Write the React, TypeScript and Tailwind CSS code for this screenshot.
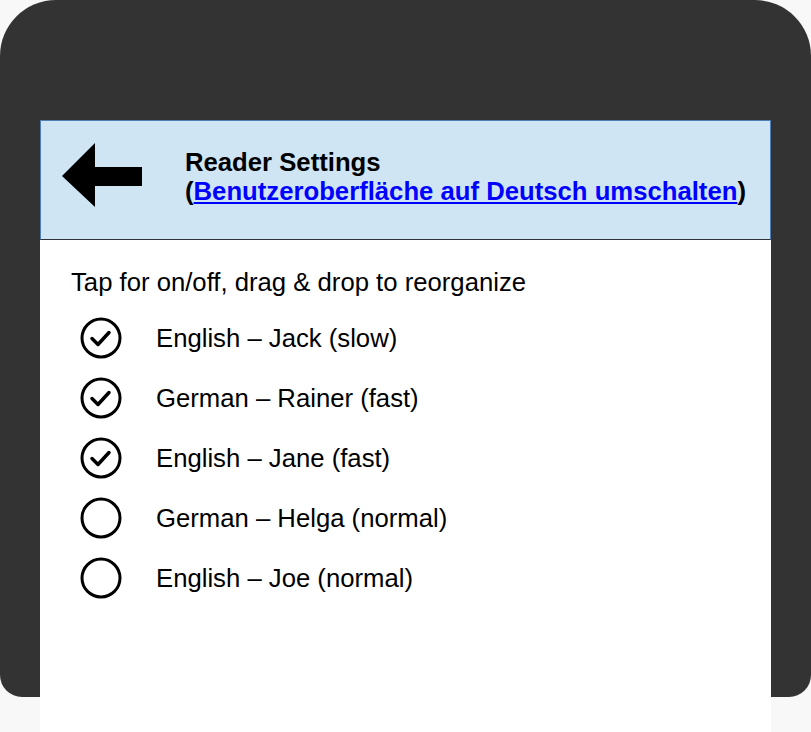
import React, { useState } from 'react';

type Voice = { label: string; on: boolean };

const VOICES: Voice[] = [
  { label: 'English – Jack (slow)', on: true },
  { label: 'German – Rainer (fast)', on: true },
  { label: 'English – Jane (fast)', on: true },
  { label: 'German – Helga (normal)', on: false },
  { label: 'English – Joe (normal)', on: false },
];

const BackArrow: React.FC = () => (
  <svg width="80" height="64" viewBox="0 0 80 64" className="shrink-0">
    <polygon points="0,33 33,0 33,24 80,24 80,43 33,43 33,64" fill="#000" />
  </svg>
);

const CheckCircle: React.FC<{ on: boolean }> = ({ on }) => (
  <svg width="42" height="42" viewBox="0 0 42 42" className="shrink-0">
    <circle cx="21" cy="21" r="19" fill="none" stroke="#000" strokeWidth="3" />
    {on && (
      <polyline
        points="12,21.5 18,27.5 29,15.5"
        fill="none"
        stroke="#000"
        strokeWidth="3.5"
        strokeLinecap="round"
        strokeLinejoin="round"
      />
    )}
  </svg>
);

const App: React.FC = () => {
  const [voices, setVoices] = useState<Voice[]>(VOICES);

  const toggle = (i: number) => {
    setVoices((v) => v.map((x, j) => (j === i ? { ...x, on: !x.on } : x)));
  };

  return (
    <div className="w-[811px] h-[732px] overflow-hidden bg-[#f8f8f8] font-['Liberation_Sans',Arial,sans-serif] text-black">
      <div className="w-[811px] h-[697px] bg-[#333333] rounded-t-[56px] rounded-b-[22px] pt-[120px] pl-[40px]">
        <div className="w-[731px] h-[612px] bg-white flex flex-col">
          {/* header */}
          <div className="h-[120px] bg-[#cfe5f3] border border-[#4f7fb6] border-b-[#2f3338] flex items-start pl-[21px] pt-[22px]">
            <BackArrow />
            <div className="ml-[43px] mt-[5px] text-[25.7px] leading-[29px] font-bold">
              <div>Reader Settings</div>
              <div>
                (<a href="#" className="text-[#0000ff] underline">Benutzeroberfläche auf Deutsch umschalten</a>)
              </div>
            </div>
          </div>

          {/* body */}
          <div className="pl-[31px] pt-[28px] text-[25.7px]">
            <div className="leading-[29px]">Tap for on/off, drag &amp; drop to reorganize</div>
            <ul className="mt-[11px]">
              {voices.map((v, i) => (
                <li
                  key={v.label}
                  onClick={() => toggle(i)}
                  className="h-[60px] flex items-center cursor-pointer select-none"
                >
                  <div className="pl-[9px] w-[85px]">
                    <CheckCircle on={v.on} />
                  </div>
                  <span>{v.label}</span>
                </li>
              ))}
            </ul>
          </div>
        </div>
      </div>
    </div>
  );
};

export default App;
